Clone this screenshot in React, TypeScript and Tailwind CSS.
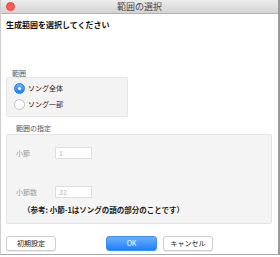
import React from 'react';

const font = { fontFamily: '"Noto Sans CJK JP", "Noto Sans", sans-serif' };

function Radio({ checked, label }: { checked?: boolean; label: string }) {
    return (
        <div className="flex items-center h-[12px] gap-[3px]">
            {checked ? (
                <div className="w-[11px] h-[11px] rounded-full bg-gradient-to-b from-[#68b1fd] to-[#1d7ef9] border border-[#2a78e4] flex items-center justify-center">
                    <div className="w-[3px] h-[3px] rounded-full bg-white" />
                </div>
            ) : (
                <div className="w-[11px] h-[11px] rounded-full bg-white border border-[#c4c4c4]" />
            )}
            <span className="text-[7px] leading-[12px] text-[#222]">{label}</span>
        </div>
    );
}

function Field({ label, value }: { label: string; value: string }) {
    return (
        <div className="flex items-center h-[12px]">
            <span className="w-[39px] text-[7px] text-[#9c9c9c] leading-[12px]">{label}</span>
            <div className="w-[37px] h-[12px] bg-white border border-[#dedede] text-[7px] leading-[10px] text-[#b3b3b3] pl-[3px]">
                {value}
            </div>
        </div>
    );
}

export default function App() {
    return (
        <div style={font} className="w-[280px] h-[257px] bg-white overflow-hidden">
            <div className="w-[280px] h-[255px] bg-white border-l border-[#cfcfcf] border-r-2 border-r-[#9a9a9a] border-b border-b-[#a8a8a8] flex flex-col">
                {/* Title bar */}
                <div className="relative h-[14px] bg-gradient-to-b from-[#ececec] to-[#d4d4d4] border-b border-[#b3b3b3] flex items-center justify-center">
                    <div className="absolute left-[5px] top-[2px] w-[9px] h-[9px] rounded-full bg-[#fc5b57] border border-[#e0443e]" />
                    <span className="text-[9px] leading-[13px] text-[#4a4a4a]">範囲の選択</span>
                </div>

                <div className="pl-[5px] pr-[5px] flex flex-col">
                    <div className="mt-[5px] h-[12px] text-[8px] leading-[12px] font-semibold text-[#111]">
                        生成範囲を選択してください
                    </div>

                    {/* 範囲 */}
                    <div className="mt-[38px] pl-[6px] h-[8px] text-[7px] leading-[8px] text-[#555]">範囲</div>
                    <div className="w-[122px] h-[40px] bg-[#f3f3f3] border border-[#e6e6e6] rounded-[2px] pt-[4px] pl-[7px] flex flex-col gap-[4px]">
                        <Radio checked label="ソング全体" />
                        <Radio label="ソング一部" />
                    </div>

                    {/* 範囲の指定 */}
                    <div className="mt-[7px] pl-[10px] h-[8px] text-[7px] leading-[8px] text-[#555]">範囲の指定</div>
                    <div className="mt-[2px] w-[266px] h-[90px] bg-[#f4f4f4] border border-[#e3e3e3] rounded-[2px] pt-[12px] pl-[9px] flex flex-col">
                        <Field label="小節" value="1" />
                        <div className="mt-[27px]">
                            <Field label="小節数" value="32" />
                        </div>
                        <div className="mt-[7px] pl-[7px] h-[10px] text-[7.5px] leading-[10px] font-bold text-[#222] whitespace-nowrap">
                            （参考: 小節-1はソングの頭の部分のことです）
                        </div>
                    </div>

                    {/* Buttons */}
                    <div className="mt-[12px] flex items-center h-[15px]">
                        <button className="w-[50px] h-[15px] bg-white border border-[#cdcdcd] rounded-[3px] shadow-[0_1px_0_rgba(0,0,0,0.08)] text-[7px] text-[#222] leading-[13px]">
                            初期設定
                        </button>
                        <button className="ml-[50px] w-[51px] h-[15px] bg-gradient-to-b from-[#67b0fd] to-[#1e7ef9] border border-[#3c8ef0] rounded-[3px] text-[7px] text-white leading-[13px]">
                            OK
                        </button>
                        <button className="ml-[6px] w-[50px] h-[15px] bg-white border border-[#cdcdcd] rounded-[3px] shadow-[0_1px_0_rgba(0,0,0,0.08)] text-[7px] text-[#222] leading-[13px]">
                            キャンセル
                        </button>
                    </div>
                </div>
            </div>
        </div>
    );
}
